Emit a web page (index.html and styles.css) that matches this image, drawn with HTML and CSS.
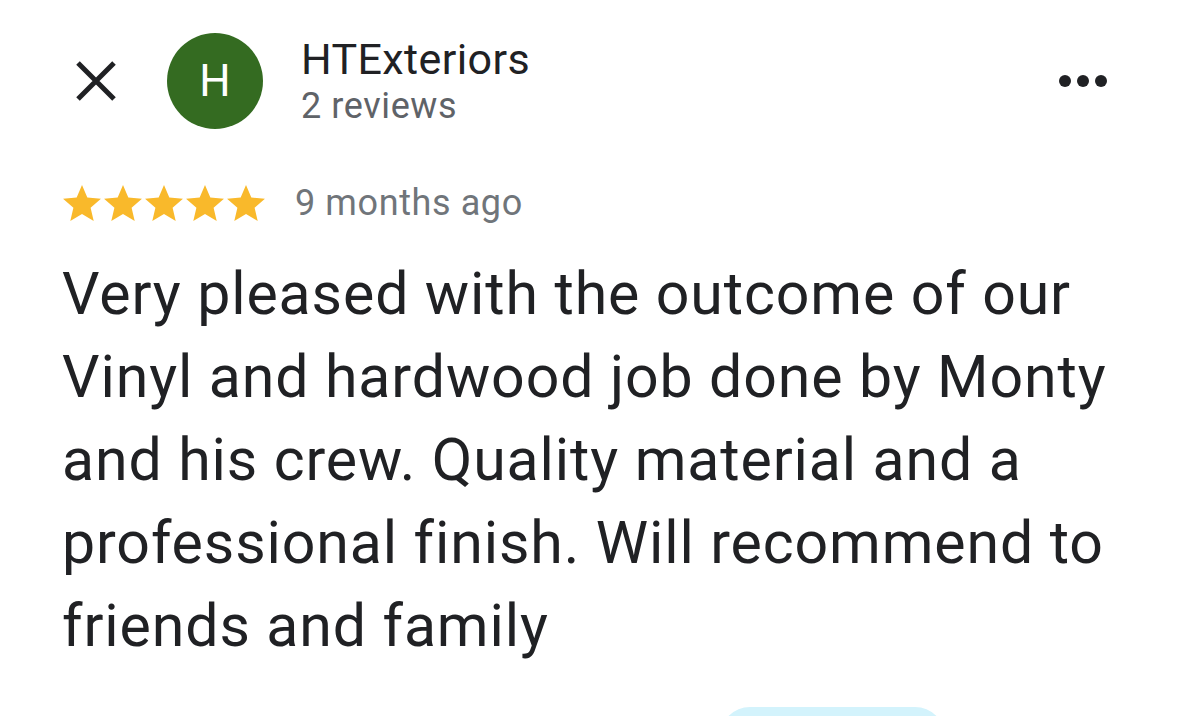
FILE: index.html
```html
<!DOCTYPE html>
<html lang="en">
<head>
    <meta charset="UTF-8">
    <meta name="viewport" content="width=device-width,initial-scale=1">
    <title>Review</title>
    <link rel="stylesheet" href="styles.css">
</head>
<body>
<div class="card">
    <div class="header">
        <div class="close-btn">
            <svg width="42" height="42" viewBox="0 0 42 42">
                <path d="M3 3 L39 39 M39 3 L3 39" stroke="#202124" stroke-width="5" fill="none"/>
            </svg>
        </div>
        <div class="avatar">H</div>
        <div class="author">
            <div class="author-name">HTExteriors</div>
            <div class="author-meta">2 reviews</div>
        </div>
        <div class="more-btn">
            <span class="dot"></span><span class="dot"></span><span class="dot"></span>
        </div>
    </div>

    <div class="rating-row">
        <div class="stars">
            <svg class="star" viewBox="2 2 20 19"><path d="M12 17.27L18.18 21l-1.64-7.03L22 9.24l-7.19-.61L12 2 9.19 8.63 2 9.24l5.46 4.73L5.82 21z"/></svg>
            <svg class="star" viewBox="2 2 20 19"><path d="M12 17.27L18.18 21l-1.64-7.03L22 9.24l-7.19-.61L12 2 9.19 8.63 2 9.24l5.46 4.73L5.82 21z"/></svg>
            <svg class="star" viewBox="2 2 20 19"><path d="M12 17.27L18.18 21l-1.64-7.03L22 9.24l-7.19-.61L12 2 9.19 8.63 2 9.24l5.46 4.73L5.82 21z"/></svg>
            <svg class="star" viewBox="2 2 20 19"><path d="M12 17.27L18.18 21l-1.64-7.03L22 9.24l-7.19-.61L12 2 9.19 8.63 2 9.24l5.46 4.73L5.82 21z"/></svg>
            <svg class="star" viewBox="2 2 20 19"><path d="M12 17.27L18.18 21l-1.64-7.03L22 9.24l-7.19-.61L12 2 9.19 8.63 2 9.24l5.46 4.73L5.82 21z"/></svg>
        </div>
        <div class="review-date">9 months ago</div>
    </div>

    <p class="review-text">Very pleased with the outcome of our Vinyl and hardwood job done by Monty and his crew. Quality material and a professional finish. Will recommend to friends and family</p>

    <div class="actions">
        <div class="pill-btn"></div>
    </div>
</div>
</body>
</html>
```

FILE: styles.css
```css
body, html{
    margin: 0;
    padding: 0;
    width: 100%;
    height: 100%;
    overflow: hidden;
    background: #fff;
}
.card{
    background: #fff;
    font-family: Roboto, "Liberation Sans", sans-serif;
    color: #202124;
}
.header{
    display: flex;
    align-items: center;
    padding: 33px 72px 0 75px;
    height: 96px;
}
.close-btn{
    width: 42px;
    height: 42px;
    display: flex;
}
.avatar{
    width: 96px;
    height: 96px;
    border-radius: 50%;
    background: #346b21;
    color: #fff;
    margin-left: 50px;
    display: flex;
    align-items: center;
    justify-content: center;
    font-size: 44px;
}
.author{
    margin-left: 38px;
}
.author-name{
    font-size: 43px;
    line-height: 50px;
    letter-spacing: 0.4px;
}
.author-meta{
    font-size: 36px;
    line-height: 44px;
    letter-spacing: 0.6px;
    color: #5f6368;
}
.more-btn{
    margin-left: auto;
    display: flex;
    gap: 6px;
}
.dot{
    width: 12px;
    height: 12px;
    border-radius: 50%;
    background: #202124;
}
.rating-row{
    display: flex;
    align-items: center;
    padding: 0 0 0 63px;
    margin-top: 53px;
}
.stars{
    display: flex;
    gap: 3px;
}
.star{
    width: 38px;
    height: 36px;
    fill: #f9b92b;
}
.review-date{
    margin-left: 30px;
    font-size: 36px;
    letter-spacing: 0.6px;
    color: #70757a;
}
.review-text{
    margin: 28px 0 0;
    padding: 0 40px 0 62px;
    font-size: 59px;
    line-height: 83px;
    letter-spacing: 0.9px;
}
.actions{
    display: flex;
    padding-left: 720px;
    margin-top: 40px;
}
.pill-btn{
    width: 225px;
    height: 60px;
    border-radius: 40px;
    background: #d3f3fc;
}
```
